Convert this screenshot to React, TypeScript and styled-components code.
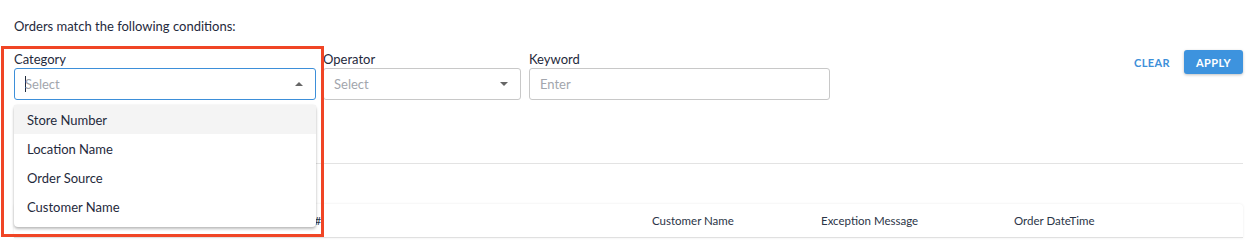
import React from "react";
import styled, { createGlobalStyle } from "styled-components";

const GlobalStyle = createGlobalStyle`
  body {
    margin: 0;
    background: #fff;
    font-family: Lato, "Liberation Sans", sans-serif;
    color: #1f2a3c;
  }
`;

const categories = ["Store Number", "Location Name", "Order Source", "Customer Name"];

const columns = [
  { label: "Store", width: "252px" },
  { label: "Order #", width: "370px" },
  { label: "Customer Name", width: "169px" },
  { label: "Exception Message", width: "193px" },
  { label: "Order DateTime", width: "1fr" },
];

const Caret = ({ up }: { up?: boolean }) => (
  <svg width="8" height="4" viewBox="0 0 8 4">
    <path d={up ? "M0 4 L4 0 L8 4 Z" : "M0 0 L4 4 L8 0 Z"} fill="#666" />
  </svg>
);

const App = () => {
  return (
    <Page>
      <GlobalStyle />
      <Title>Orders match the following conditions:</Title>
      <FilterRow>
        <Fields>
          <Field width={302}>
            <Label>Category</Label>
            <SelectBox focused>
              <Placeholder>
                <TextCursor />
                Select
              </Placeholder>
              <Caret up />
            </SelectBox>
            <Menu>
              {categories.map((c, i) => (
                <MenuItem key={c} active={i === 0}>
                  {c}
                </MenuItem>
              ))}
            </Menu>
          </Field>
          <Field width={198}>
            <Label>Operator</Label>
            <SelectBox>
              <Placeholder>Select</Placeholder>
              <Caret />
            </SelectBox>
          </Field>
          <Field width={301} gapBefore={1}>
            <Label>Keyword</Label>
            <SelectBox>
              <Placeholder>Enter</Placeholder>
            </SelectBox>
          </Field>
        </Fields>
        <Actions>
          <TextButton>Clear</TextButton>
          <ApplyButton>Apply</ApplyButton>
        </Actions>
      </FilterRow>
      <Divider />
      <TableHead cols={columns.map((c) => c.width).join(" ")}>
        {columns.map((c) => (
          <HeadCell key={c.label}>{c.label}</HeadCell>
        ))}
      </TableHead>
      <Highlight />
    </Page>
  );
};

const Page = styled.div`
  position: relative;
  width: 1253px;
  height: 240px;
  box-sizing: border-box;
  padding: 17px 10px 0 14px;
  overflow: hidden;
`;

const Title = styled.div`
  font-size: 13px;
  line-height: 18px;
  margin-bottom: 15px;
`;

const FilterRow = styled.div`
  display: flex;
  justify-content: space-between;
  align-items: flex-start;
`;

const Fields = styled.div`
  display: flex;
  gap: 7px;
`;

const Field = styled.div<{ width: number; gapBefore?: number }>`
  position: relative;
  width: ${(p) => p.width}px;
  margin-left: ${(p) => p.gapBefore ?? 0}px;
  display: flex;
  flex-direction: column;
`;

const Label = styled.div`
  font-size: 13px;
  line-height: 18px;
`;

const SelectBox = styled.div<{ focused?: boolean }>`
  height: 32px;
  box-sizing: border-box;
  border: 1px solid ${(p) => (p.focused ? "#3d8fd9" : "#c8c8c8")};
  border-radius: 3px;
  display: flex;
  align-items: center;
  justify-content: space-between;
  padding: 0 12px 0 10px;
`;

const Placeholder = styled.span`
  display: flex;
  align-items: center;
  font-size: 13px;
  color: #a2a6ad;
`;

const TextCursor = styled.span`
  width: 1px;
  height: 16px;
  background: #1f2a3c;
  margin-right: -1px;
`;

const Menu = styled.ul`
  position: absolute;
  top: calc(100% + 5px);
  left: 0;
  right: 0;
  margin: 0;
  padding: 0 0 6px;
  list-style: none;
  background: #fff;
  border-radius: 4px;
  box-shadow: 0 2px 3px rgba(0, 0, 0, 0.25), 0 0 2px rgba(0, 0, 0, 0.1);
  z-index: 2;
`;

const MenuItem = styled.li<{ active?: boolean }>`
  height: 29px;
  display: flex;
  align-items: center;
  padding-left: 13px;
  font-size: 13px;
  background: ${(p) => (p.active ? "#f4f4f4" : "transparent")};
`;

const Actions = styled.div`
  display: flex;
  align-items: center;
  gap: 6px;
`;

const TextButton = styled.button`
  border: none;
  background: none;
  font-family: inherit;
  font-size: 11px;
  font-weight: 700;
  letter-spacing: 0.4px;
  text-transform: uppercase;
  color: #3d8fd9;
  padding: 0 8px;
  height: 24px;
`;

const ApplyButton = styled(TextButton)`
  width: 59px;
  background: #3d93de;
  color: #fff;
  border-radius: 3px;
  box-shadow: 0 1px 3px rgba(0, 0, 0, 0.25);
`;

const Divider = styled.div`
  margin-top: 63px;
  border-top: 1px solid #e3e3e3;
`;

const TableHead = styled.div<{ cols: string }>`
  margin-top: 40px;
  height: 34px;
  display: grid;
  grid-template-columns: ${(p) => p.cols};
  align-items: center;
  padding-left: 16px;
  box-sizing: border-box;
  border-radius: 4px 4px 0 0;
  border-bottom: 1px solid #e0e0e0;
  box-shadow: 0 0 3px rgba(0, 0, 0, 0.08);
`;

const HeadCell = styled.div`
  font-size: 11.5px;
  color: #2b3547;
`;

const Highlight = styled.div`
  position: absolute;
  left: 1px;
  top: 46px;
  width: 323px;
  height: 191px;
  box-sizing: border-box;
  border: 3px solid #f04525;
  pointer-events: none;
  z-index: 3;
`;

export default App;
